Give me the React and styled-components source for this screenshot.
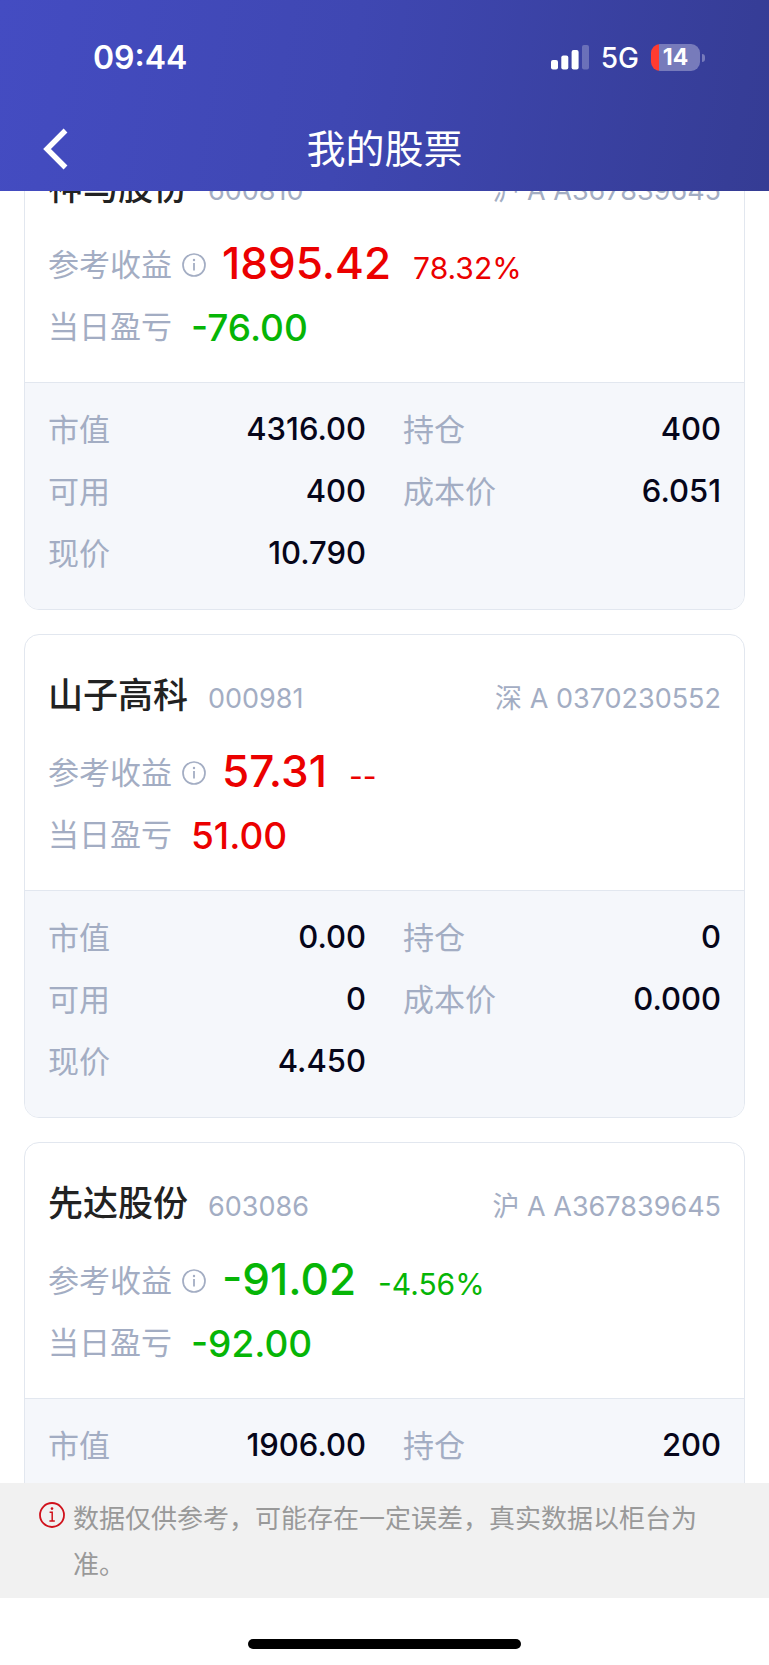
import React, { useLayoutEffect, useRef } from 'react'
import styled, { createGlobalStyle } from 'styled-components'

const GlobalStyle = createGlobalStyle`
  * {
    box-sizing: border-box;
  }
  body {
    margin: 0;
    background: #fff;
    font-family: Inter, 'Noto Sans CJK SC', sans-serif;
  }
  h1, h2, p, dl, dt, dd {
    margin: 0;
    font-weight: 400;
  }
  button {
    padding: 0;
    border: 0;
    background: none;
    color: inherit;
    cursor: pointer;
  }
`

const Screen = styled.div`
  display: flex;
  flex-direction: column;
  height: 100vh;
`

const Header = styled.header`
  flex: none;
  padding-bottom: 9px;
  color: #fff;
  background: linear-gradient(100deg, #444cc2 0%, #3f47b2 45%, #353c94 100%);
`

const StatusBar = styled.div`
  display: flex;
  align-items: center;
  justify-content: space-between;
  height: 115px;
  padding: 0 64px 0 93px;
`

const Time = styled.time`
  font-size: 32px;
  font-weight: 600;
`

const StatusIcons = styled.div`
  display: flex;
  align-items: center;
  gap: 12px;
`

const Network = styled.span`
  font-size: 28px;
  font-weight: 500;
`

const Battery = styled.div`
  display: flex;
  align-items: center;
  gap: 2px;
`

const BatteryBody = styled.div`
  width: 49px;
  height: 27px;
  border-radius: 9px;
  background: linear-gradient(90deg, #ff3b30 8px, #777bbb 8px);
  font-size: 23px;
  font-weight: 700;
  line-height: 27px;
  text-align: center;
`

const BatteryTip = styled.div`
  width: 3px;
  height: 8px;
  border-radius: 0 3px 3px 0;
  background: #777bbb;
`

const NavBar = styled.div`
  display: grid;
  grid-template-columns: 1fr auto 1fr;
  align-items: center;
  height: 67px;
  padding: 0 42px;
`

const BackButton = styled.button`
  display: flex;
  justify-self: start;
`

const Title = styled.h1`
  font-size: 39px;
  line-height: 56px;
`

const List = styled.main`
  flex: 1;
  min-height: 0;
  display: flex;
  flex-direction: column;
  gap: 24px;
  padding: 24px;
  overflow-y: auto;
  scrollbar-width: none;
`

const Card = styled.article`
  flex: none;
  border: 1px solid #e2e7ef;
  border-radius: 15px;
  overflow: hidden;
`

const Summary = styled.div`
  padding: 36px 23px 24px;
`

const CardHead = styled.div`
  display: flex;
  align-items: baseline;
  height: 48px;
  margin-bottom: 23px;
`

const Name = styled.h2`
  color: #222;
  font-size: 35px;
  font-weight: 500;
  line-height: 48px;
`

const Code = styled.span`
  margin-left: 20px;
  color: #a3adc3;
  font-size: 27px;
  line-height: 40px;
`

const Account = styled(Code)`
  margin-left: auto;
`

const ProfitRow = styled.div`
  display: flex;
  align-items: center;
  height: 62px;
  color: ${(props) => (props.$up ? '#eb0000' : '#06b506')};
`

const Label = styled.span`
  color: #a3adc3;
  font-size: 31px;
  line-height: 46px;
`

const InfoButton = styled.button`
  display: flex;
  margin: 0 16px 0 10px;
  color: #a3adc3;
`

const Amounts = styled.div`
  display: flex;
  align-items: baseline;
  gap: 22px;
  padding-bottom: 4px;
`

const Profit = styled.strong`
  font-size: 44px;
  font-weight: 500;
  line-height: 54px;
`

const Percent = styled.span`
  font-size: 30px;
`

const DayProfit = styled.strong`
  margin-left: 19px;
  font-size: 37px;
  font-weight: 500;
`

const Details = styled.dl`
  display: grid;
  grid-template-columns: 1fr 1fr;
  column-gap: 37px;
  padding: 16px 23px 24px;
  border-top: 1px solid #e2e7ef;
  background: #f5f7fb;
`

const Detail = styled.div`
  display: flex;
  align-items: center;
  justify-content: space-between;
  height: 62px;
`

const Value = styled.dd`
  padding-bottom: 3px;
  color: #06061a;
  font-size: 31px;
  font-weight: 500;
`

const Notice = styled.footer`
  flex: none;
  display: flex;
  gap: 8px;
  padding: 13px 48px 10px 39px;
  color: #999;
  background: #f1f1f1;
  font-size: 26px;
  line-height: 46px;

  svg {
    flex: none;
    margin-top: 6px;
  }
`

const HomeArea = styled.div`
  flex: none;
  display: flex;
  justify-content: center;
  padding: 41px 0 16px;
`

const HomeBar = styled.div`
  width: 273px;
  height: 10px;
  border-radius: 5px;
  background: #000;
`

const stocks = [
  {
    name: '神马股份',
    code: '600810',
    account: '沪 A A367839645',
    profit: '1895.42',
    percent: '78.32%',
    day: '-76.00',
    details: [['市值', '4316.00'], ['持仓', '400'], ['可用', '400'], ['成本价', '6.051'], ['现价', '10.790']],
  },
  {
    name: '山子高科',
    code: '000981',
    account: '深 A 0370230552',
    profit: '57.31',
    percent: '--',
    day: '51.00',
    details: [['市值', '0.00'], ['持仓', '0'], ['可用', '0'], ['成本价', '0.000'], ['现价', '4.450']],
  },
  {
    name: '先达股份',
    code: '603086',
    account: '沪 A A367839645',
    profit: '-91.02',
    percent: '-4.56%',
    day: '-92.00',
    details: [['市值', '1906.00'], ['持仓', '200']],
  },
]

const isUp = (value) => !value.startsWith('-')

function SignalIcon() {
  return (
    <svg width="38" height="25" viewBox="0 0 38 25" fill="#fff" aria-hidden="true">
      <rect x="0" y="15" width="7" height="9.5" rx="2" />
      <rect x="10.3" y="10.5" width="7" height="14" rx="2" />
      <rect x="20.6" y="5" width="7" height="19.5" rx="2" />
      <rect x="31" y="0" width="7" height="24.5" rx="2" opacity="0.25" />
    </svg>
  )
}

function InfoIcon() {
  return (
    <svg width="24" height="24" viewBox="0 0 24 24" fill="none" stroke="currentColor" aria-hidden="true">
      <circle cx="12" cy="12" r="11" strokeWidth="1.7" />
      <path d="M12 10v7.5" strokeWidth="1.8" />
      <circle cx="12" cy="7" r="1.2" fill="currentColor" stroke="none" />
    </svg>
  )
}

function NoticeIcon() {
  return (
    <svg width="26" height="26" viewBox="0 0 26 26" fill="none" stroke="#d0111b" aria-hidden="true">
      <circle cx="13" cy="13" r="12" strokeWidth="1.8" />
      <path d="M10.6 10.2h2.6v8.6M10.4 19h5.4" strokeWidth="1.5" />
      <circle cx="13" cy="6.6" r="1.3" fill="#d0111b" stroke="none" />
    </svg>
  )
}

function StockCard({ stock }) {
  return (
    <Card>
      <Summary>
        <CardHead>
          <Name>{stock.name}</Name>
          <Code>{stock.code}</Code>
          <Account>{stock.account}</Account>
        </CardHead>
        <ProfitRow $up={isUp(stock.profit) || stock.profit === '--'}>
          <Label>参考收益</Label>
          <InfoButton type="button" aria-label="参考收益说明">
            <InfoIcon />
          </InfoButton>
          <Amounts>
            <Profit>{stock.profit}</Profit>
            <Percent>{stock.percent}</Percent>
          </Amounts>
        </ProfitRow>
        <ProfitRow $up={isUp(stock.day)}>
          <Label>当日盈亏</Label>
          <DayProfit>{stock.day}</DayProfit>
        </ProfitRow>
      </Summary>
      <Details>
        {stock.details.map(([label, value]) => (
          <Detail key={label}>
            <Label as="dt">{label}</Label>
            <Value>{value}</Value>
          </Detail>
        ))}
      </Details>
    </Card>
  )
}

function App() {
  const listRef = useRef(null)

  // open the list part-way down the first card
  useLayoutEffect(() => {
    listRef.current.scrollTop = 89
  }, [])

  return (
    <Screen lang="zh-CN">
      <GlobalStyle />
      <Header>
        <StatusBar>
          <Time>09:44</Time>
          <StatusIcons>
            <SignalIcon />
            <Network>5G</Network>
            <Battery>
              <BatteryBody>14</BatteryBody>
              <BatteryTip />
            </Battery>
          </StatusIcons>
        </StatusBar>
        <NavBar>
          <BackButton type="button" aria-label="返回">
            <svg width="26" height="42" viewBox="0 0 26 42" fill="none" stroke="#fff" strokeWidth="5.4">
              <path d="M23.5 2.5L5 21l18.500 18.500" />
            </svg>
          </BackButton>
          <Title>我的股票</Title>
        </NavBar>
      </Header>
      <List ref={listRef}>
        {stocks.map((stock) => (
          <StockCard key={stock.code} stock={stock} />
        ))}
      </List>
      <Notice>
        <NoticeIcon />
        <p>数据仅供参考，可能存在一定误差，真实数据以柜台为准。</p>
      </Notice>
      <HomeArea>
        <HomeBar />
      </HomeArea>
    </Screen>
  )
}

export default App
